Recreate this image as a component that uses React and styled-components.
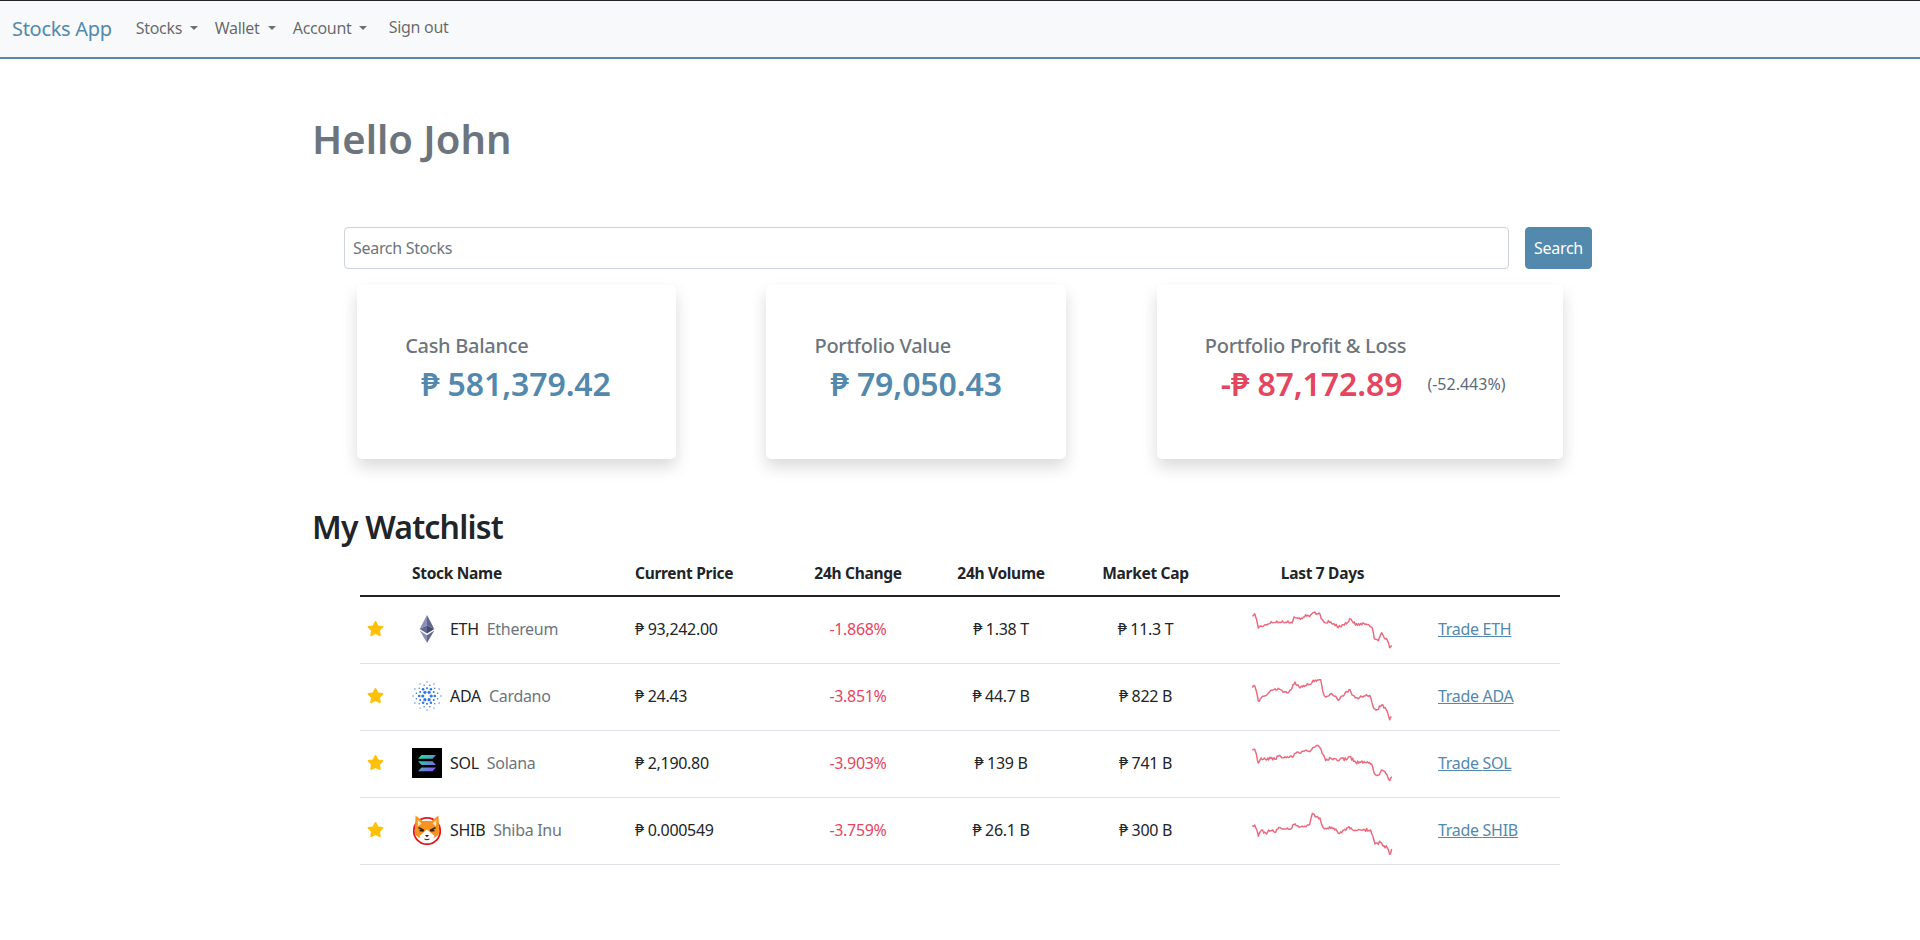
import React from "react";
import styled, { createGlobalStyle } from "styled-components";
import { FaStar } from "react-icons/fa";

const FONT = `"Noto Sans", "Open Sans", "DejaVu Sans", sans-serif`;
const Global = createGlobalStyle`
  html, body { margin: 0; padding: 0; background: #fff; }
  body { font-family: ${FONT}; font-size: 16px; color: #212529; }
  * { box-sizing: border-box; }
`;

const Nav = styled.nav`
  display: flex; align-items: center; height: 59px; padding: 0 12px 2px;
  background: #f8f9fa; border-top: 1px solid #212529; border-bottom: 2px solid #5289ad;
`;
const Brand = styled.a`font-size: 20px; color: #5289ad; margin-right: 24px; letter-spacing: -0.3px;`;
const NavLink = styled.a`
  display: inline-flex; align-items: center; font-size: 16px; letter-spacing: -0.3px; color: rgba(0,0,0,.6);
  width: ${p => p.$w}px; position: relative; top: ${p => p.$up ? -1 : 0}px;
`;
const Caret = styled.span`
  display: inline-block; margin-left: 8px; border-top: 4.8px solid #6f6f6f;
  border-left: 4.8px solid transparent; border-right: 4.8px solid transparent;
`;
const Main = styled.main`width: 1320px; margin: 0 auto; padding: 0 12px;`;
const Hello = styled.h1`
  margin: 56px 0 64px; font-size: 40px; line-height: 48px; font-weight: 600; color: #6c757d; letter-spacing: 0;
`;
const SearchRow = styled.form`display: flex; gap: 16px; padding: 0 16px 0 32px; margin-bottom: 16px;`;
const Input = styled.input`
  flex: 1; height: 42px; padding: 0 8px; font: 16px ${FONT}; letter-spacing: -0.3px; color: #212529;
  border: 1px solid #ced4da; border-radius: 4px;
  &::placeholder { color: #6c757d; opacity: 1; }
`;
const Btn = styled.button`
  width: 67px; height: 42px; padding: 0; font: 16px ${FONT}; letter-spacing: -0.3px; color: #fff;
  background: #5289ad; border: 1px solid #5289ad; border-radius: 4px;
`;
const Cards = styled.section`display: flex; justify-content: space-around;`;
const Card = styled.div`
  width: ${p => p.$w}px; height: 174px; padding: 47px 0 0 48px; border-radius: 5px; background: #fff;
  box-shadow: 0 8px 16px rgba(0,0,0,.15);
`;
const CardTitle = styled.div`font-size: 20px; line-height: 28px; font-weight: 500; color: #6c757d; letter-spacing: -0.3px;`;
const ValueRow = styled.div`display: flex; align-items: center; margin-top: 2px; padding-left: 16px;`;
const Value = styled.div`
  font-size: 32px; line-height: 44px; font-weight: 600; letter-spacing: -0.1px; color: ${p => p.$neg ? "#e64560" : "#5289ad"};
`;
const Percent = styled.span`font-size: 16px; margin-left: 25px; color: #5c6b7a; letter-spacing: 0;`;
const Heading = styled.h2`
  margin: 49px 0 6px; font-size: 32px; line-height: 38px; font-weight: 600; color: #212529; letter-spacing: -0.8px;
`;
const Table = styled.table`
  width: 1200px; margin: 0 auto 0 48px; border-collapse: collapse; table-layout: fixed; font-size: 16px; letter-spacing: -0.3px;
`;
const Th = styled.th`
  height: 44px; padding: 0 8px 2px; font-weight: 700; font-size: 15.5px; color: #212529;
  text-align: ${p => p.$left ? "left" : "center"}; border-bottom: 2px solid #212529;
`;
const Tr = styled.tr`height: 67px; border-bottom: 1px solid #dee2e6;`;
const Td = styled.td`padding: 0 8px 2px; text-align: ${p => p.$center ? "center" : "left"}; color: ${p => p.$neg ? "#e64560" : "#212529"};`;
const Coin = styled.div`display: flex; align-items: center;`;
const CoinIcon = styled.svg`width: 30px; height: 30px; margin-right: 8px; flex: none;`;
const Ticker = styled.span`color: #212529; margin-right: 8px;`;
const CoinName = styled.span`color: #6c757d;`;
const StarCell = styled(Td)`padding-left: 7px; color: #ffc107; line-height: 0;`;
const Trade = styled.a`color: #5289ad; text-decoration: underline; margin-left: -5px;`;
const Spark = styled.svg`display: block; width: 147px; height: 50px; margin: 0 auto;`;

const S = [
  "40,61 47,54 52,69 58,97 66,91 80,87 100,81 120,80 140,80 160,81 165,64 175,67 190,69 200,57 212,63 222,51 240,52 250,71 255,79 275,79 285,84 298,96 310,87 325,81 332,69 340,77 355,89 365,83 385,87 400,97 406,129 418,135 428,111 436,127 445,134 452,156 458,149",
  "40,75 47,69 52,85 58,115 70,101 82,98 95,83 118,77 135,87 150,88 168,58 180,73 190,73 205,63 215,65 222,53 245,51 252,88 260,103 280,95 298,113 315,98 330,81 342,98 355,106 375,100 392,98 405,138 415,141 428,127 445,146 452,171 458,163",
  "40,61 47,59 52,73 58,100 66,85 80,90 95,86 108,89 118,80 135,84 145,81 160,83 170,71 185,71 198,63 212,66 225,53 240,50 250,73 260,93 275,85 295,93 303,88 325,88 332,81 350,98 365,98 385,96 398,103 407,133 418,136 430,121 440,131 452,153 458,141",
  "40,87 47,85 52,97 58,119 68,100 80,109 95,102 110,107 120,92 135,97 145,94 155,98 165,84 180,92 200,90 212,84 220,50 232,60 243,64 252,92 262,97 272,90 290,97 298,110 315,100 330,90 345,102 365,100 395,100 408,142 425,137 435,147 445,154 452,174 458,157",
];
// Adds a small deterministic wobble to each hand-read segment.
const wobble = (str, seed) => {
  const pts = str.split(" ").map(s => s.split(",").map(Number));
  const out = [];
  pts.forEach((p, i) => {
    const n = pts[i + 1];
    out.push(p.join(","));
    if (!n) return;
    const steps = Math.max(1, Math.floor((n[0] - p[0]) / 3));
    for (let k = 1; k < steps; k++) {
      const t = k / steps;
      const j = Math.sin((k + i) * 12.9898 + seed * 78.233) * 43758.5453;
      const r = (j - Math.floor(j) - 0.5) * 9;
      out.push(`${(p[0] + (n[0] - p[0]) * t).toFixed(1)},${(p[1] + (n[1] - p[1]) * t + r).toFixed(1)}`);
    }
  });
  return out.join(" ");
};
const Sparkline = ({ i }) => (
  <Spark viewBox="30 25 441 150">
    <polyline points={wobble(S[i], i + 1)} fill="none" stroke="#e64560" strokeOpacity=".8" strokeWidth="4.4" strokeLinejoin="round" />
  </Spark>
);

const Eth = () => (
  <CoinIcon viewBox="0 0 30 30">
    <path d="M15 1 L7.7 15 L15 11.6z" fill="#8a92b2" />
    <path d="M15 1 L22.3 15 L15 11.6z" fill="#62688f" />
    <path d="M15 11.6 L7.7 15 L15 19.4z" fill="#62688f" />
    <path d="M15 11.6 L22.3 15 L15 19.4z" fill="#454a75" />
    <path d="M7.7 16.6 L15 21.2 V29z" fill="#8a92b2" />
    <path d="M22.3 16.6 L15 21.2 V29z" fill="#62688f" />
  </CoinIcon>
);
const adaDots = [];
const rings = [[4.2, 6, 1.6], [7.8, 6, 1.3], [7.8, 6, 1, 30], [11, 12, .75, 15], [14, 6, .7, 0], [14, 6, .7, 30]];
rings.forEach(([r, n, d, off = 0]) => {
  for (let k = 0; k < n; k++) {
    const a = ((off + k * 360 / n) * Math.PI) / 180;
    adaDots.push([15 + r * Math.cos(a), 15 + r * Math.sin(a), d]);
  }
});
const Ada = () => (
  <CoinIcon viewBox="0 0 30 30">
    {adaDots.map(([x, y, r], i) => <circle key={i} cx={x} cy={y} r={r} fill="#3178e6" />)}
  </CoinIcon>
);
const Sol = () => (
  <CoinIcon viewBox="0 0 30 30">
    <defs>
      <linearGradient id="solg" x1="0" y1="0" x2="1" y2="1">
        <stop offset="0" stopColor="#19e6a4" />
        <stop offset=".5" stopColor="#4f9fc4" />
        <stop offset="1" stopColor="#9a45fe" />
      </linearGradient>
    </defs>
    <rect width="30" height="30" fill="#000" />
    <path d="M9.5 7 H24 L20.5 10.8 H6z M6 13.2 H20.5 L24 17 H9.5z M9.5 19.4 H24 L20.5 23.2 H6z" fill="url(#solg)" />
  </CoinIcon>
);
const Shib = () => (
  <CoinIcon viewBox="0 0 30 30">
    <circle cx="15" cy="16" r="13.2" fill="#fff" stroke="#e8141b" strokeWidth="1.8" />
    <path d="M3 17 L3.5 0.5 L10.5 6 H19.5 L26.5 0.5 L27 17 C27 21 23 23 19.5 23 L15 20 L10.5 23 C7 23 3 21 3 17z" fill="#f7931e" />
    <path d="M5.5 4.5 L9.5 8.5 L6 11.5z M24.5 4.5 L20.5 8.5 L24 11.5z" fill="#fde3b0" />
    <path d="M15 14.5 L7.5 21 C10 26 13 27 15 27 C17 27 20 26 22.5 21z" fill="#fff" />
    <path d="M6.5 12.5 L12 15.5 M23.5 12.5 L18 15.5 M7.5 15.4 L11.5 16 M22.5 15.4 L18.5 16" stroke="#3a2410" strokeWidth="1.5" fill="none" />
    <path d="M13 20 H17 L15 22.3z" fill="#2a1a10" />
    <path d="M12.5 24 Q15 25.6 17.5 24" stroke="#2a1a10" strokeWidth="1" fill="none" />
  </CoinIcon>
);

const rows = [
  { t: "ETH", n: "Ethereum", I: Eth, p: "₱ 93,242.00", c: "-1.868%", v: "₱ 1.38 T", m: "₱ 11.3 T" },
  { t: "ADA", n: "Cardano", I: Ada, p: "₱ 24.43", c: "-3.851%", v: "₱ 44.7 B", m: "₱ 822 B" },
  { t: "SOL", n: "Solana", I: Sol, p: "₱ 2,190.80", c: "-3.903%", v: "₱ 139 B", m: "₱ 741 B" },
  { t: "SHIB", n: "Shiba Inu", I: Shib, p: "₱ 0.000549", c: "-3.759%", v: "₱ 26.1 B", m: "₱ 300 B" },
];
const widths = [44, 223, 168, 126, 160, 129, 225, 125];

export default function App() {
  return (
    <>
      <Global />
      <Nav>
        <Brand>Stocks App</Brand>
        <NavLink $w={79}>Stocks<Caret /></NavLink>
        <NavLink $w={78}>Wallet<Caret /></NavLink>
        <NavLink $w={96}>Account<Caret /></NavLink>
        <NavLink $up>Sign out</NavLink>
      </Nav>
      <Main>
        <Hello>Hello John</Hello>
        <SearchRow onSubmit={e => e.preventDefault()}>
          <Input placeholder="Search Stocks" />
          <Btn>Search</Btn>
        </SearchRow>
        <Cards>
          <Card $w={319}>
            <CardTitle>Cash Balance</CardTitle>
            <ValueRow><Value>₱ 581,379.42</Value></ValueRow>
          </Card>
          <Card $w={300}>
            <CardTitle>Portfolio Value</CardTitle>
            <ValueRow><Value>₱ 79,050.43</Value></ValueRow>
          </Card>
          <Card $w={406}>
            <CardTitle>Portfolio Profit &amp; Loss</CardTitle>
            <ValueRow><Value $neg>-₱ 87,172.89</Value><Percent>(-52.443%)</Percent></ValueRow>
          </Card>
        </Cards>
        <Heading>My Watchlist</Heading>
        <Table>
          <colgroup>{widths.map((w, i) => <col key={i} style={{ width: w }} />)}</colgroup>
          <thead>
            <tr>
              <Th />
              <Th $left>Stock Name</Th>
              <Th $left>Current Price</Th>
              <Th>24h Change</Th>
              <Th>24h Volume</Th>
              <Th>Market Cap</Th>
              <Th>Last 7 Days</Th>
              <Th />
            </tr>
          </thead>
          <tbody>
            {rows.map((r, i) => (
              <Tr key={r.t}>
                <StarCell><FaStar size={17} /></StarCell>
                <Td>
                  <Coin><r.I /><Ticker>{r.t}</Ticker><CoinName>{r.n}</CoinName></Coin>
                </Td>
                <Td>{r.p}</Td>
                <Td $center $neg>{r.c}</Td>
                <Td $center>{r.v}</Td>
                <Td $center>{r.m}</Td>
                <Td $center><Sparkline i={i} /></Td>
                <Td><Trade>Trade {r.t}</Trade></Td>
              </Tr>
            ))}
          </tbody>
        </Table>
      </Main>
    </>
  );
}
